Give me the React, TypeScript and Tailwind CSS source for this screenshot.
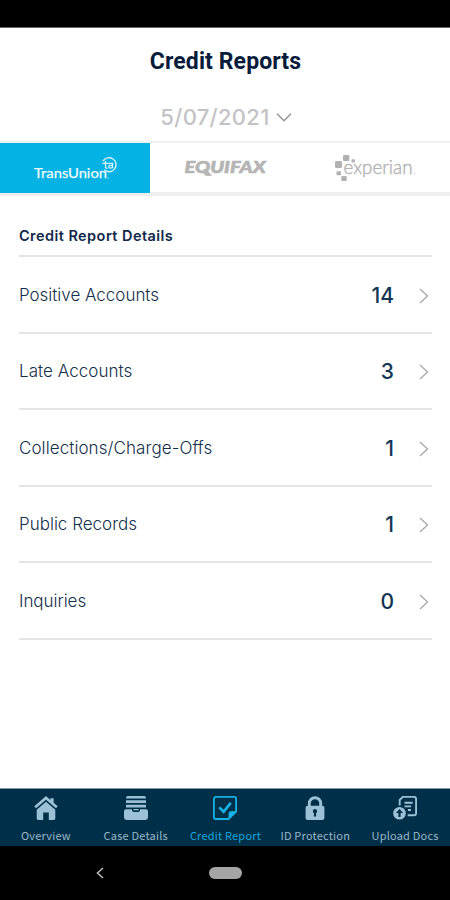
import type { ReactNode } from "react";

const rows = [
  { label: "Positive Accounts", value: 14, height: "h-[77px]", spacing: "tracking-[-0.02px]" },
  { label: "Late Accounts", value: 3, height: "h-[76px]", spacing: "tracking-[0.05px]" },
  { label: "Collections/Charge-Offs", value: 1, height: "h-[77px]", spacing: "tracking-[0.08px]" },
  { label: "Public Records", value: 1, height: "h-[76px]", spacing: "tracking-[0px]" },
  { label: "Inquiries", value: 0, height: "h-[77px]", spacing: "tracking-[-0.05px]" },
];

function TransUnionLogo() {
  return (
    <svg className="h-[50px] w-[150px]" viewBox="0 0 150 50" fill="none" aria-label="TransUnion">
      <text x="34" y="35.3" fontSize="14" fontWeight="400" textLength="73" lengthAdjust="spacingAndGlyphs" fill="#f0fbff" className="font-['Lato',sans-serif]" stroke="#f0fbff" strokeWidth="0.25">TransUnion</text>
      <circle cx="108.2" cy="35.2" r="0.6" fill="#c8effa" />
      <path d="M103 18.2a7 7 0 1 1 1.2 8.6" stroke="#d4f3fc" strokeWidth="1.4" />
      <path d="M102.3 20.4h11M105.5 18v6q0 1.5 2 1.3M112.5 20.9v3.8q-3.8 1-3.8-1t3.8-1" stroke="#d4f3fc" strokeWidth="1.3" />
    </svg>
  );
}

function EquifaxLogo() {
  return (
    <svg className="h-[50px] w-[150px]" viewBox="0 0 150 50" aria-label="Equifax">
      <text x="34.5" y="29.5" fontSize="17.5" fontWeight="900" fontStyle="italic" textLength="81" lengthAdjust="spacingAndGlyphs" fill="#b5b5b5" stroke="#b5b5b5" strokeWidth="0.7" className="font-['Lato',sans-serif]">EQUIFAX</text>
      <path d="m53 26 3.2 0 6 6.8-3.6 0z" fill="#b5b5b5" />
    </svg>
  );
}

function ExperianLogo() {
  return (
    <svg className="h-[50px] w-[150px]" viewBox="0 0 150 50" fill="#b2b2b2" aria-label="Experian">
      <rect x="43" y="12" width="6.3" height="6" rx="1.2" />
      <rect x="35" y="18" width="7" height="7" rx="1.3" />
      <rect x="51.5" y="16.3" width="3.4" height="3.3" rx="0.8" />
      <rect x="36.5" y="28.3" width="4.5" height="4" rx="1" />
      <rect x="41.3" y="33.1" width="5.4" height="5" rx="1.2" />
      <text x="43.5" y="31" fontSize="19" fontWeight="300" textLength="69" lengthAdjust="spacingAndGlyphs" className="font-['Lato',sans-serif]" stroke="#b2b2b2" strokeWidth="0.4">experian</text>
      <circle cx="114.4" cy="30.5" r="0.6" />
    </svg>
  );
}

function HomeIcon() {
  return (
    <svg className="h-6 w-6" viewBox="0 0 24 24" fill="#9cc1d6">
      <path d="M12 0 0.3 10.3 2 12.3 12 3.8l10 8.5 1.7-2L19.6 6.7V2.2h-3.1V4z" />
      <path d="m12 5.8 9.3 8v8.7a1.4 1.4 0 0 1-1.4 1.4h-5.1v-7.4H9.2v7.4H4.1a1.4 1.4 0 0 1-1.4-1.4v-8.7z" />
    </svg>
  );
}

function TrayIcon() {
  return (
    <svg className="h-6 w-6" viewBox="0 0 24 24" fill="#9cc1d6">
      <path d="M4 0h16a2 2 0 0 1 2 2v.5H2V2a2 2 0 0 1 2-2ZM2 4.3h20v2.6H2zM2 8.7h20v2.7H2z" />
      <path d="M2 13.2h6v.7a2 2 0 0 0 2 2h4a2 2 0 0 0 2-2v-.7h6a2 2 0 0 1 2 2V21a3 3 0 0 1-3 3H3a3 3 0 0 1-3-3v-5.8a2 2 0 0 1 2-2Z" />
      <path d="M9.5 13h5v1.2h-5z" />
    </svg>
  );
}

function ReportIcon() {
  return (
    <svg className="h-6 w-6" viewBox="0 0 24 24" fill="none" stroke="#18b1e4" strokeWidth="1.8">
      <path d="M3 .9h18A2.1 2.1 0 0 1 23.1 3v12.5L15.5 23H3a2.1 2.1 0 0 1-2.1-2.1V3A2.1 2.1 0 0 1 3 .9Z" />
      <path d="M16 22.5v-5.2a1.8 1.8 0 0 1 1.8-1.8h5z" fill="#18b1e4" strokeWidth="0.8" />
      <path d="m6.3 11.4 4.3 4.4 7.2-9" strokeWidth="2.7" />
    </svg>
  );
}

function LockIcon() {
  return (
    <svg className="h-6 w-6" viewBox="0 0 24 24">
      <path d="M6.3 11V7.4a5.7 5.7 0 0 1 11.4 0V11" fill="none" stroke="#9cc1d6" strokeWidth="2.9" />
      <rect x="2.6" y="9.7" width="18.8" height="14.2" rx="2" fill="#9cc1d6" />
      <path d="M12 13a2.2 2.2 0 0 1 1.1 4.1v3.5h-2.2v-3.5A2.2 2.2 0 0 1 12 13Z" fill="#003049" />
    </svg>
  );
}

function UploadIcon() {
  return (
    <svg className="h-6 w-6" viewBox="0 0 24 24" fill="none" stroke="#9cc1d6" strokeWidth="1.9">
      <path d="M6.7 9.5V4L9.8.9h11.3A2 2 0 0 1 23.1 3v14.2a2 2 0 0 1-2 2h-6.4" />
      <path d="M11.5 6.8h8.2M11.5 10.4h6.6M15 14h3" />
      <circle cx="6.5" cy="17.3" r="6.3" fill="#9cc1d6" stroke="none" />
      <path d="m6.5 13 3.6 4H7.6v4.1H5.4V17H2.9z" fill="#003049" stroke="none" />
    </svg>
  );
}

function NavItem({ label, icon, active }: { label: string; icon: ReactNode; active?: boolean }) {
  return (
    <button className="flex w-[90px] flex-col items-center pt-[7px]">
      {icon}
      <span
        className={`mt-[7px] font-['Noto_Sans_CJK_SC',sans-serif] text-[11px] leading-4 font-normal tracking-[0.2px] whitespace-nowrap ${active ? "text-[#18a7dc]" : "text-[#9cb7c8]"}`}
      >
        {label}
      </span>
    </button>
  );
}

export default function App() {
  return (
    <div className="flex h-[900px] w-[450px] flex-col overflow-hidden bg-white font-['Inter',sans-serif] text-[#142f4b]">
      <div className="h-[28px] shrink-0 border-b border-[#666666] bg-black" />
      <header className="h-[113px] shrink-0">
        <h1 className="flex h-[67px] items-center justify-center pt-[2px] pl-[1px] font-['Roboto',sans-serif] text-[23px] font-bold tracking-[0.1px] text-[#071b3b]">
          Credit Reports
        </h1>
        <button className="flex h-[45px] w-full items-center justify-center gap-[6px] pl-[2px] text-[22px] font-medium tracking-[0.3px] text-[#c3c3c5]">
          <span>5/07/2021</span>
          <svg className="h-[9px] w-[16px]" viewBox="0 0 16 9" fill="none" stroke="#929292" strokeWidth="1.4">
            <path d="m1 .8 7 7 7-7" />
          </svg>
        </button>
      </header>

      <div className="flex h-[55px] shrink-0 border-t-2 border-b-4 border-t-[#f0f0f0] border-b-[#eeeeee]">
        <div className="h-[50px] w-[150px] bg-[#04b2e3]"><TransUnionLogo /></div>
        <div className="h-[50px] w-[150px]"><EquifaxLogo /></div>
        <div className="h-[50px] w-[150px]"><ExperianLogo /></div>
      </div>

      <main className="flex-1 pr-[18px] pl-[19px]">
        <h2 className="flex h-[61px] items-end border-b-2 border-[#e3e4e5] pb-[9px] text-[14.5px] leading-5 font-semibold tracking-[0.44px] text-[#10284a]">
          Credit Report Details
        </h2>
        {rows.map((row) => (
          <div key={row.label} className={`flex items-center border-b-2 border-[#e3e4e5] pt-[2px] ${row.height}`}>
            <span className={`flex-1 text-[17px] font-light ${row.spacing}`}>{row.label}</span>
            <span className="text-[21px] font-medium text-[#133653]">{row.value}</span>
            <svg className="mr-[3px] ml-[25px] h-[16px] w-[10px]" viewBox="0 0 10 16" fill="none" stroke="#a7a8aa" strokeWidth="1.3">
              <path d="m1 1 7.5 7L1 15" />
            </svg>
          </div>
        ))}
      </main>

      <nav className="flex h-[58px] shrink-0 border-t border-[#809aa7] bg-[#003049] pl-[1px]">
        <NavItem label="Overview" icon={<HomeIcon />} />
        <NavItem label="Case Details" icon={<TrayIcon />} />
        <NavItem label="Credit Report" icon={<ReportIcon />} active />
        <NavItem label="ID Protection" icon={<LockIcon />} />
        <NavItem label="Upload Docs" icon={<UploadIcon />} />
      </nav>
      <footer className="grid h-[54px] shrink-0 grid-cols-[96px_113px_33px] items-center bg-black">
        <svg className="col-start-2 h-[12px] w-[8px]" viewBox="0 0 8 12" fill="none" stroke="#b9b9b9" strokeWidth="1.6">
          <path d="M7 1 1.5 6 7 11" />
        </svg>
        <span className="h-[12px] w-[33px] rounded-full bg-[#a5a5a5]" />
      </footer>
    </div>
  );
}
